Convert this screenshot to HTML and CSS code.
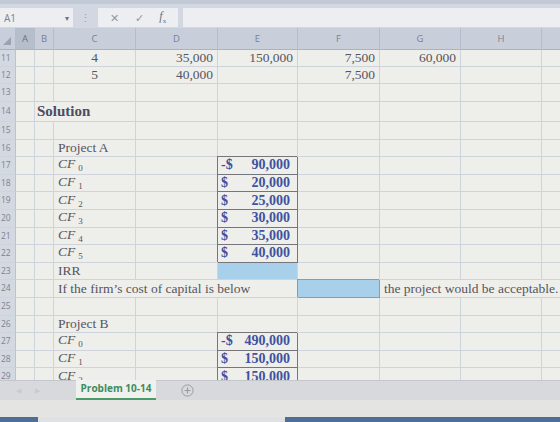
FILE: index.html
```html
<!DOCTYPE html>
<html lang="en">
<head>
    <meta charset="UTF-8">
    <title>Problem 10-14</title>
    <link rel="stylesheet" href="styles.css">
</head>
<body>

<div class="formula-bar">
    <div class="name-box"><span>A1</span><span class="caret">&#9662;</span></div>
    <div class="grip">&#8942;</div>
    <div class="fx-buttons">
        <span class="fx-btn">&#10005;</span>
        <span class="fx-btn">&#10003;</span>
        <span class="fx-btn fx"><i>f</i><sub>x</sub></span>
    </div>
    <div class="formula-input"></div>
</div>

<div class="sheet">
    <table class="grid">
        <colgroup>
            <col class="c-rh"><col class="c-a"><col class="c-b"><col class="c-c"><col class="c-d">
            <col class="c-e"><col class="c-f"><col class="c-g"><col class="c-h"><col class="c-i">
        </colgroup>
        <tr class="head">
            <th class="corner"><span class="tri"></span></th>
            <th class="active">A</th><th>B</th><th>C</th><th>D</th><th>E</th><th>F</th><th>G</th><th>H</th><th></th>
        </tr>
        <tr class="r-top">
            <th class="rh">11</th><td></td><td></td><td class="mid">4</td><td class="num">35,000</td><td class="num">150,000</td><td class="num">7,500</td><td class="num">60,000</td><td></td><td></td>
        </tr>
        <tr class="r-top">
            <th class="rh">12</th><td></td><td></td><td class="mid">5</td><td class="num">40,000</td><td></td><td class="num">7,500</td><td></td><td></td><td></td>
        </tr>
        <tr class="r-top r13">
            <th class="rh">13</th><td></td><td></td><td></td><td></td><td></td><td></td><td></td><td></td><td></td>
        </tr>
        <tr class="r-title">
            <th class="rh">14</th><td></td><td colspan="2" class="title">Solution</td><td></td><td></td><td></td><td></td><td></td><td></td>
        </tr>
        <tr>
            <th class="rh">15</th><td></td><td></td><td></td><td></td><td></td><td></td><td></td><td></td><td></td>
        </tr>
        <tr>
            <th class="rh">16</th><td></td><td></td><td>Project A</td><td></td><td class="box-top"></td><td></td><td></td><td></td><td></td>
        </tr>
        <tr>
            <th class="rh">17</th><td></td><td></td><td><i>CF</i><sub>0</sub></td><td></td>
            <td class="boxed"><span class="acct"><span>-$</span><span>90,000</span></span></td><td></td><td></td><td></td><td></td>
        </tr>
        <tr>
            <th class="rh">18</th><td></td><td></td><td><i>CF</i><sub>1</sub></td><td></td>
            <td class="boxed"><span class="acct"><span>$</span><span>20,000</span></span></td><td></td><td></td><td></td><td></td>
        </tr>
        <tr>
            <th class="rh">19</th><td></td><td></td><td><i>CF</i><sub>2</sub></td><td></td>
            <td class="boxed"><span class="acct"><span>$</span><span>25,000</span></span></td><td></td><td></td><td></td><td></td>
        </tr>
        <tr>
            <th class="rh">20</th><td></td><td></td><td><i>CF</i><sub>3</sub></td><td></td>
            <td class="boxed"><span class="acct"><span>$</span><span>30,000</span></span></td><td></td><td></td><td></td><td></td>
        </tr>
        <tr>
            <th class="rh">21</th><td></td><td></td><td><i>CF</i><sub>4</sub></td><td></td>
            <td class="boxed"><span class="acct"><span>$</span><span>35,000</span></span></td><td></td><td></td><td></td><td></td>
        </tr>
        <tr>
            <th class="rh">22</th><td></td><td></td><td><i>CF</i><sub>5</sub></td><td></td>
            <td class="boxed"><span class="acct"><span>$</span><span>40,000</span></span></td><td></td><td></td><td></td><td></td>
        </tr>
        <tr>
            <th class="rh">23</th><td></td><td></td><td>IRR</td><td></td><td class="input"></td><td></td><td></td><td></td><td></td>
        </tr>
        <tr>
            <th class="rh">24</th><td></td><td></td><td colspan="3">If the firm&rsquo;s cost of capital is below</td>
            <td class="input framed"></td><td colspan="3">the project would be acceptable.</td>
        </tr>
        <tr>
            <th class="rh">25</th><td></td><td></td><td></td><td></td><td></td><td></td><td></td><td></td><td></td>
        </tr>
        <tr>
            <th class="rh">26</th><td></td><td></td><td>Project B</td><td></td><td></td><td></td><td></td><td></td><td></td>
        </tr>
        <tr>
            <th class="rh">27</th><td></td><td></td><td><i>CF</i><sub>0</sub></td><td></td>
            <td class="boxed"><span class="acct"><span>-$</span><span>490,000</span></span></td><td></td><td></td><td></td><td></td>
        </tr>
        <tr>
            <th class="rh">28</th><td></td><td></td><td><i>CF</i><sub>1</sub></td><td></td>
            <td class="boxed"><span class="acct"><span>$</span><span>150,000</span></span></td><td></td><td></td><td></td><td></td>
        </tr>
        <tr>
            <th class="rh">29</th><td></td><td></td><td><i>CF</i><sub>2</sub></td><td></td>
            <td class="boxed"><span class="acct"><span>$</span><span>150,000</span></span></td><td></td><td></td><td></td><td></td>
        </tr>
    </table>
</div>

<div class="tab-bar">
    <div class="tab-nav"><span>&#9664;</span><span>&#9654;</span></div>
    <div class="tab">Problem 10-14</div>
    <div class="add-sheet">
        <svg width="13" height="13" viewBox="0 0 13 13">
            <circle cx="6.5" cy="6.5" r="5.6" fill="none" stroke="#9a9ca4" stroke-width="1"/>
            <path d="M6.5 3.6v5.8M3.6 6.5h5.8" stroke="#9a9ca4" stroke-width="1.1"/>
        </svg>
    </div>
</div>
<div class="status-gap"></div>
<div class="status-bar">
    <span class="seg-left"></span>
    <span class="seg-right"></span>
</div>

</body>
</html>
```

FILE: styles.css
```css
body {
    margin: 0;
    width: 560px;
    height: 422px;
    overflow: hidden;
    background: #e6e6e4;
    font-family: "Liberation Serif", "Times New Roman", serif;
}

/* formula bar */
.formula-bar {
    display: flex;
    align-items: center;
    height: 28px;
    padding-top: 3px;
    box-sizing: border-box;
    background: #d2d7e1;
    border-top: 4px solid #c3cad7;
    font-family: "Open Sans", "Liberation Sans", sans-serif;
}

.name-box {
    display: flex;
    justify-content: space-between;
    align-items: center;
    width: 73px;
    height: 19px;
    padding: 0 4px 0 4px;
    box-sizing: border-box;
    background: #eceef1;
    color: #7c8290;
    font-size: 10px;
}

.caret {
    font-size: 8px;
    color: #6e7482;
}

.grip {
    width: 25px;
    text-align: center;
    color: #9ca2ae;
    font-size: 11px;
}

.fx-buttons {
    display: flex;
    align-items: center;
    justify-content: space-around;
    width: 80px;
    height: 19px;
    padding: 0 4px;
    box-sizing: border-box;
    background: #eceef1;
    color: #9097a6;
    font-size: 11px;
}

.fx {
    font-family: "Liberation Serif", serif;
    color: #6c7280;
    font-size: 12px;
}

.fx sub {
    font-size: 7px;
}

.formula-input {
    flex: 1;
    height: 19px;
    margin-left: 5px;
    background: #eceef1;
}

/* sheet grid */
.sheet {
    height: 352px;
    overflow: hidden;
}

.grid {
    table-layout: fixed;
    border-collapse: separate;
    border-spacing: 0;
    width: 620px;
    color: #55555f;
    font-size: 13.5px;
    background: #eeeeea;
}

.c-rh { width: 16px; }
.c-a { width: 19px; }
.c-b { width: 19px; }
.c-c { width: 82px; }
.c-d { width: 82px; }
.c-e { width: 80px; }
.c-f { width: 82px; }
.c-g { width: 81px; }
.c-h { width: 81px; }
.c-i { width: 78px; }

.grid td,
.grid th {
    padding: 0 0 0 4px;
    box-sizing: border-box;
    border-right: 1px solid #cfd3db;
    border-bottom: 1px solid #cfd3db;
    white-space: nowrap;
    overflow: visible;
    line-height: 1;
    text-align: left;
    font-weight: normal;
}

.grid tr { height: 17.6px; }
.grid tr.head { height: 22px; }
.grid tr.r-top { height: 17px; }
.grid tr.r13 { height: 18px; }
.grid tr.r-title { height: 20px; }

.head th {
    background: #c8cfdb;
    color: #7b8292;
    text-align: center;
    padding: 0;
    font-family: "Open Sans", "Liberation Sans", sans-serif;
    font-size: 9.5px;
    border-right-color: #b6bdca;
    border-bottom-color: #aab2c0;
}

.head th.active {
    background: #b6becc;
    color: #6b7282;
}

.corner {
    position: relative;
}

.tri {
    position: absolute;
    right: 4px;
    bottom: 4px;
    width: 0;
    height: 0;
    border-left: 8px solid transparent;
    border-bottom: 8px solid #9ba3b3;
}

.grid th.rh {
    background: #d4d8e0;
    color: #7d8390;
    padding-left: 1px;
    font-family: "Open Sans", "Liberation Sans", sans-serif;
    font-size: 8.5px;
    border-right-color: #bcc2ce;
}

.grid td.num {
    text-align: right;
    padding: 0 4px 0 0;
}

.grid td.mid {
    text-align: center;
    padding: 0;
}

.grid td.title {
    padding-left: 2px;
    font-weight: bold;
    font-size: 15px;
    color: #4c4c60;
}

.grid sub {
    font-size: 9px;
    vertical-align: -3px;
    margin-left: 3px;
}

/* bordered result cells */
.grid td.boxed {
    border-right: 1px solid #74757d;
    border-bottom: 1px solid #74757d;
    box-shadow: -1px -1px 0 #74757d;
    padding: 0 7px 0 3px;
}

.acct {
    display: flex;
    justify-content: space-between;
    font-weight: bold;
    font-size: 14px;
    color: #3d52a0;
}

.grid td.input {
    background: #a9d0ea;
}

.grid td.framed {
    border-right: 1px solid #7f9fb8;
    border-bottom: 1px solid #7f9fb8;
    box-shadow: -1px -1px 0 #7f9fb8;
}

/* sheet tabs */
.tab-bar {
    display: flex;
    align-items: stretch;
    height: 20px;
    background: #d8d9dc;
    border-top: 1px solid #c4c6cb;
    box-sizing: border-box;
    font-family: "Open Sans", "Liberation Sans", sans-serif;
}

.tab-nav {
    display: flex;
    align-items: center;
    gap: 14px;
    width: 76px;
    padding-left: 16px;
    box-sizing: border-box;
    color: #c9cacd;
    font-size: 7px;
}

.tab {
    width: 80px;
    margin-top: -1px;
    background: #f0f0ee;
    color: #3e8d5c;
    font-weight: bold;
    font-size: 10px;
    text-align: center;
    line-height: 17px;
    border-bottom: 2px solid #4a9a68;
    box-sizing: border-box;
}

.add-sheet {
    display: flex;
    align-items: center;
    padding-left: 25px;
}

.status-gap {
    height: 17px;
    background: #e4e4e3;
}

.status-bar {
    display: flex;
    justify-content: space-between;
    height: 5px;
    background: #e0e1e3;
}

.seg-left {
    width: 38px;
    background: #4f6e95;
}

.seg-right {
    width: 275px;
    background: #4f6e95;
}
```
